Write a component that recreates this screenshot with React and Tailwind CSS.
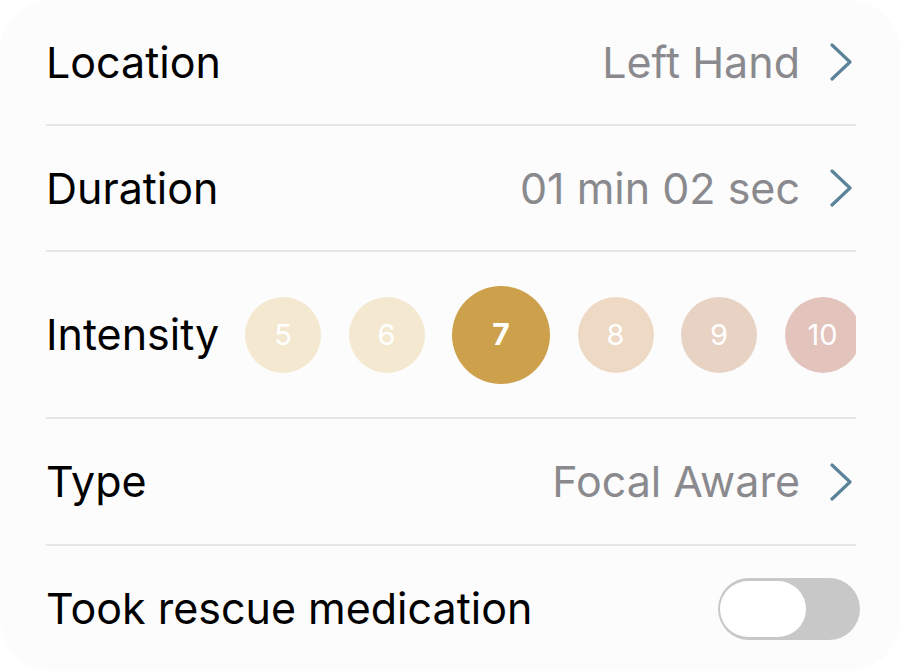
import React from "react";

const font = { fontFamily: "Inter, 'Liberation Sans', sans-serif" };

const Chevron = () => (
  <svg width="26" height="40" viewBox="0 0 26 40" className="ml-[30px] shrink-0">
    <path d="M2 3 L20 20 L2 37" fill="none" stroke="#5b8399" strokeWidth="3.2" strokeLinecap="round" strokeLinejoin="round" />
  </svg>
);

const Divider = () => <div className="h-[2px] bg-[#e6e6e6]" />;

const LinkRow = ({ label, value, height }) => (
  <div className={`flex items-center justify-between ${height}`}>
    <span className="text-[43px] text-black">{label}</span>
    <div className="flex items-center">
      <span className="text-[43px] text-[#8a8a8e]">{value}</span>
      <Chevron />
    </div>
  </div>
);

const levels = [
  { n: 5, bg: "bg-[#f4e9d0]" },
  { n: 6, bg: "bg-[#f4e9d0]" },
  { n: 7, bg: "bg-[#cda04c]" },
  { n: 8, bg: "bg-[#eed9c4]" },
  { n: 9, bg: "bg-[#e8d2c3]" },
  { n: 10, bg: "bg-[#e3c4bd]" },
];

export default function App() {
  const selected = 7;

  return (
    <div className="w-[900px] h-[671px] bg-white" style={font}>
      <div className="h-[671px] bg-[#fcfcfc] rounded-[52px] pl-[46px] pr-[44px] flex flex-col">
        <LinkRow label="Location" value="Left Hand" height="h-[124px]" />
        <Divider />
        <LinkRow label="Duration" value="01 min 02 sec" height="h-[124px]" />
        <Divider />
        <div className="h-[165px] flex items-center">
          <span className="w-[199px] shrink-0 text-[43px] text-black">Intensity</span>
          <div className="flex-1 overflow-hidden flex items-center gap-[27.5px]">
            {levels.map((l) =>
              l.n === selected ? (
                <div
                  key={l.n}
                  className={`w-[98px] h-[98px] shrink-0 rounded-full ${l.bg} flex items-center justify-center text-white text-[30px] font-bold`}
                >
                  {l.n}
                </div>
              ) : (
                <div
                  key={l.n}
                  className={`w-[76px] h-[76px] shrink-0 rounded-full ${l.bg} flex items-center justify-center text-white text-[29px]`}
                >
                  {l.n}
                </div>
              )
            )}
          </div>
        </div>
        <Divider />
        <LinkRow label="Type" value="Focal Aware" height="h-[125px]" />
        <Divider />
        <div className="flex-1 flex items-center justify-between">
          <span className="text-[43px] text-black">Took rescue medication</span>
          <button className="w-[142px] h-[62px] -mr-[4px] rounded-full bg-[#c8c8c8] flex items-center pl-[2px]">
            <span className="w-[86px] h-[56px] rounded-full bg-white block" />
          </button>
        </div>
      </div>
    </div>
  );
}
